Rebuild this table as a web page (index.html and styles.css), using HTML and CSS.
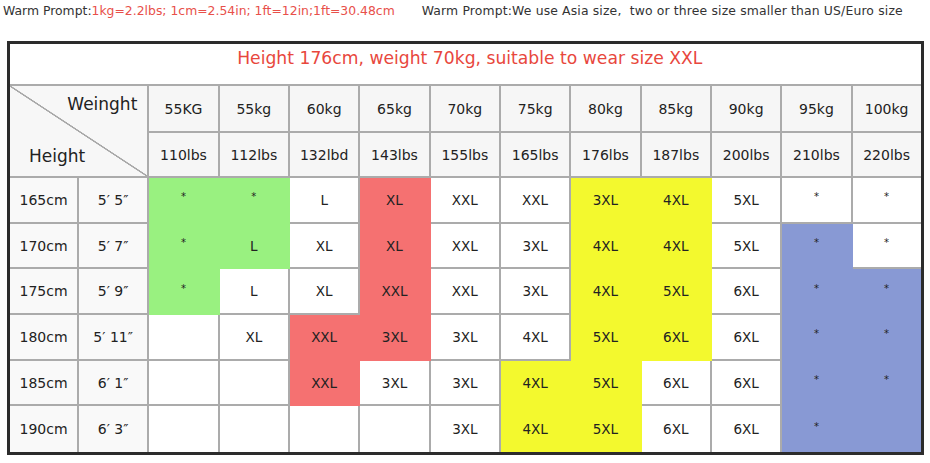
FILE: index.html
```html
<!DOCTYPE html>
<html>
<head>
<meta charset="utf-8">
<link rel="stylesheet" href="styles.css">
</head>
<body>
<div class="prompts">
  <span class="prompt">Warm Prompt:<span class="red">1kg=2.2lbs; 1cm=2.54in; 1ft=12in;1ft=30.48cm</span></span>
  <span class="prompt second">Warm Prompt:We use Asia size,&nbsp; two or three size smaller than US/Euro size</span>
</div>
<div class="chart">
  <div class="c title">Height 176cm, weight 70kg, suitable to wear size XXL</div>

  <div class="c corner"><span class="w">Weinght</span><span class="h">Height</span></div>
  <div class="c hd">55KG</div><div class="c hd">55kg</div><div class="c hd">60kg</div><div class="c hd">65kg</div><div class="c hd">70kg</div><div class="c hd">75kg</div><div class="c hd">80kg</div><div class="c hd">85kg</div><div class="c hd">90kg</div><div class="c hd">95kg</div><div class="c hd last">100kg</div>
  <div class="c hd">110lbs</div><div class="c hd">112lbs</div><div class="c hd">132lbd</div><div class="c hd">143lbs</div><div class="c hd">155lbs</div><div class="c hd">165lbs</div><div class="c hd">176lbs</div><div class="c hd">187lbs</div><div class="c hd">200lbs</div><div class="c hd">210lbs</div><div class="c hd last">220lbs</div>

  <div class="c side">165cm</div><div class="c side">5′ 5″</div>
  <div class="c g"><i>*</i></div><div class="c g"><i>*</i></div><div class="c">L</div><div class="c r">XL</div><div class="c">XXL</div><div class="c">XXL</div><div class="c y">3XL</div><div class="c y">4XL</div><div class="c">5XL</div><div class="c"><i>*</i></div><div class="c last"><i>*</i></div>

  <div class="c side">170cm</div><div class="c side">5′ 7″</div>
  <div class="c g"><i>*</i></div><div class="c g">L</div><div class="c">XL</div><div class="c r">XL</div><div class="c">XXL</div><div class="c">3XL</div><div class="c y">4XL</div><div class="c y">4XL</div><div class="c">5XL</div><div class="c b"><i>*</i></div><div class="c last"><i>*</i></div>

  <div class="c side">175cm</div><div class="c side">5′ 9″</div>
  <div class="c g"><i>*</i></div><div class="c">L</div><div class="c">XL</div><div class="c r">XXL</div><div class="c">XXL</div><div class="c">3XL</div><div class="c y">4XL</div><div class="c y">5XL</div><div class="c">6XL</div><div class="c b"><i>*</i></div><div class="c b last"><i>*</i></div>

  <div class="c side">180cm</div><div class="c side">5′ 11″</div>
  <div class="c"></div><div class="c">XL</div><div class="c r">XXL</div><div class="c r">3XL</div><div class="c">3XL</div><div class="c">4XL</div><div class="c y">5XL</div><div class="c y">6XL</div><div class="c">6XL</div><div class="c b"><i>*</i></div><div class="c b last"><i>*</i></div>

  <div class="c side">185cm</div><div class="c side">6′ 1″</div>
  <div class="c"></div><div class="c"></div><div class="c r">XXL</div><div class="c">3XL</div><div class="c">3XL</div><div class="c y">4XL</div><div class="c y">5XL</div><div class="c">6XL</div><div class="c">6XL</div><div class="c b"><i>*</i></div><div class="c b last"><i>*</i></div>

  <div class="c side bot">190cm</div><div class="c side bot">6′ 3″</div>
  <div class="c bot"></div><div class="c bot"></div><div class="c bot"></div><div class="c bot"></div><div class="c bot">3XL</div><div class="c y bot">4XL</div><div class="c y bot">5XL</div><div class="c bot">6XL</div><div class="c bot">6XL</div><div class="c b bot"><i>*</i></div><div class="c b bot last"></div>
</div>
</body>
</html>
```
FILE: styles.css
```css
* { box-sizing: border-box; }
body {
  margin: 0;
  background: #ffffff;
  font-family: "DejaVu Sans", "Open Sans", sans-serif;
  color: #1e1e1e;
}
.prompts {
  display: flex;
  gap: 27px;
  height: 41px;
  padding: 1px 0 0 3px;
  font-size: 12.4px;
  line-height: 20px;
  color: #333;
  white-space: nowrap;
}
.prompt.second { letter-spacing: 0.15px; }
.red { color: #e8504a; }
.chart {
  display: grid;
  grid-template-columns: 69px repeat(11, 70.33px) 68px;
  grid-template-rows: 42px 47px 45px repeat(6, 45.7px);
  width: 917px;
  margin-left: 7px;
  border: 3px solid #2c2c2c;
  box-sizing: border-box;
}
.c {
  display: flex;
  align-items: center;
  justify-content: center;
  border-right: 2px solid #ababab;
  border-bottom: 2px solid #ababab;
  font-size: 13.5px;
  background: #fff;
  color: #222;
  white-space: nowrap;
}
.c i { font-style: normal; font-size: 10px; position: relative; top: -3px; }
.c.last { border-right: none; }
.c.bot { border-bottom: none; }
.title {
  grid-column: 1 / -1;
  border-right: none;
  color: #e8473d;
  font-size: 17.2px;
  padding: 0 0 13px 9px;
}
.hd { background: #f6f6f6; font-size: 14px; }
.side { background: #f9f9f9; font-size: 14px; }
.corner {
  grid-column: 1 / 3;
  grid-row: 2 / 4;
  background:
    linear-gradient(to top right, transparent calc(50% - 1px), #a8a8a8 calc(50% - 0.5px), #a8a8a8 calc(50% + 0.5px), transparent calc(50% + 1px)),
    #f7f7f7;
  flex-direction: column;
  align-items: stretch;
  justify-content: space-between;
  padding: 8px 10px 10px 19px;
  font-size: 17px;
}
.corner .w { text-align: right; }
.corner .h { text-align: left; }
.g { background: #99f180; border-color: #99f180; }
.r { background: #f57171; border-color: #f57171; }
.y { background: #f3f92e; border-color: #f3f92e; }
.b { background: #8899d4; border-color: #8899d4; }
```
